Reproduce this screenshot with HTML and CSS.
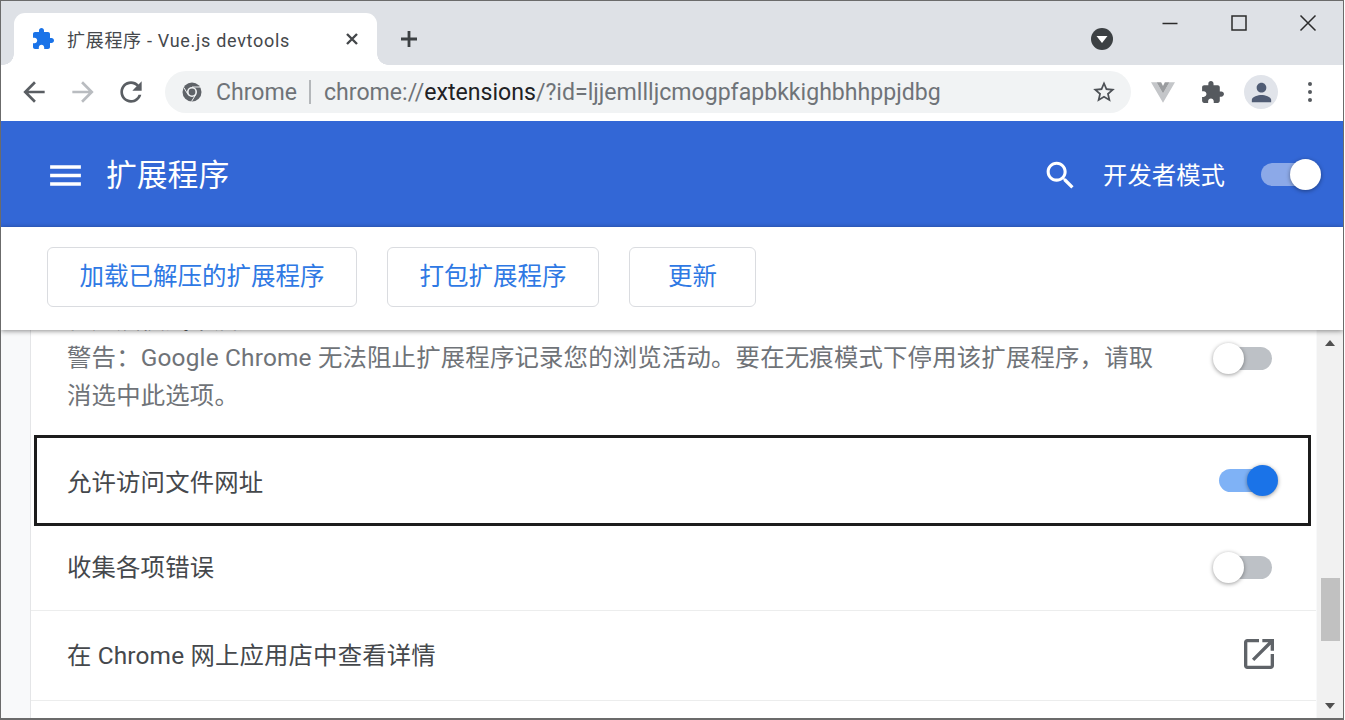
FILE: index.html
```html
<!DOCTYPE html>
<html lang="zh-CN">
<head>
<meta charset="utf-8">
<title>扩展程序 - Vue.js devtools</title>
<link rel="stylesheet" href="styles.css">
</head>
<body>
<div class="window">
  <div class="tabstrip">
    <div class="tab">
      <svg class="tab-icon" viewBox="0 0 24 24"><path d="M20.5 11H19V7c0-1.1-.9-2-2-2h-4V3.5C13 2.12 11.88 1 10.5 1S8 2.12 8 3.5V5H4c-1.1 0-1.99.9-1.99 2v3.8H3.5c1.49 0 2.7 1.21 2.7 2.7s-1.21 2.7-2.7 2.7H2V20c0 1.1.9 2 2 2h3.8v-1.5c0-1.49 1.21-2.7 2.7-2.7 1.49 0 2.7 1.21 2.7 2.7V22H17c1.1 0 2-.9 2-2v-4h1.5c1.38 0 2.5-1.12 2.5-2.5S21.88 11 20.5 11z"/></svg>
      <span class="tab-title">扩展程序 - Vue.js devtools</span>
      <svg class="tab-close" viewBox="0 0 14 14"><path d="M2 2l10 10M12 2L2 12"/></svg>
    </div>
    <svg class="new-tab" viewBox="0 0 20 20"><path d="M10 2v16M2 10h16"/></svg>
    <svg class="media" viewBox="0 0 22 22"><circle cx="11" cy="11" r="11"/><path class="media-arrow" d="M5.5 8h11L11 15z"/></svg>
    <div class="win-controls">
      <svg class="win-btn" viewBox="0 0 18 18"><path d="M1.5 9.5h15"/></svg>
      <svg class="win-btn" viewBox="0 0 18 18"><path d="M2 2h14v14H2z"/></svg>
      <svg class="win-btn" viewBox="0 0 18 18"><path d="M1.5 1.5l15 15M16.5 1.5l-15 15"/></svg>
    </div>
  </div>

  <div class="toolbar">
    <div class="nav">
      <svg class="nav-icon" viewBox="0 0 24 24"><path d="M20 11H7.83l5.59-5.59L12 4l-8 8 8 8 1.41-1.41L7.83 13H20v-2z"/></svg>
      <svg class="nav-icon nav-off" viewBox="0 0 24 24"><path d="M4 11h12.17l-5.59-5.59L12 4l8 8-8 8-1.41-1.41L16.17 13H4v-2z"/></svg>
      <svg class="nav-icon" viewBox="0 0 24 24"><path d="M17.65 6.35C16.2 4.9 14.21 4 12 4c-4.42 0-7.99 3.58-7.99 8s3.57 8 7.99 8c3.73 0 6.84-2.55 7.73-6h-2.08c-.82 2.33-3.04 4-5.65 4-3.31 0-6-2.69-6-6s2.69-6 6-6c1.66 0 3.14.69 4.22 1.78L13 11h7V4l-2.35 2.35z"/></svg>
    </div>
    <div class="omnibox">
      <svg class="site-icon" viewBox="0 0 20 20"><circle cx="10" cy="10" r="9.5" fill="#5f6368"/><circle cx="10" cy="10" r="5" fill="#f1f3f4"/><circle cx="10" cy="10" r="3.4" fill="#5f6368"/><path d="M10 5h8.5M6 12.5L1.8 5.5M13.8 12.5L9.5 19.5" stroke="#f1f3f4" stroke-width="1" fill="none"/></svg>
      <span class="site-name">Chrome</span>
      <span class="omni-sep"></span>
      <span class="url"><span class="url-dim">chrome://</span>extensions<span class="url-dim">/?id=ljjemllljcmogpfapbkkighbhhppjdbg</span></span>
      <svg class="star" viewBox="0 0 24 24"><path d="M22 9.24l-7.19-.62L12 2 9.19 8.63 2 9.24l5.46 4.73L5.82 21 12 17.27 18.18 21l-1.63-7.03L22 9.24zM12 15.4l-3.76 2.27 1-4.28-3.32-2.88 4.38-.38L12 6.1l1.71 4.04 4.38.38-3.32 2.88 1 4.28L12 15.4z"/></svg>
    </div>
    <div class="tools">
      <div class="tool">
        <svg class="vue" viewBox="0 0 26 22"><path fill="#c4c6c9" d="M0 0h6l7 12L20 0h6L13 22z"/><path fill="#9a9c9f" d="M6 0h5l2 4 2-4h5l-7 12z"/></svg>
      </div>
      <div class="tool">
        <svg class="puzzle" viewBox="0 0 24 24"><path d="M20.5 11H19V7c0-1.1-.9-2-2-2h-4V3.5C13 2.12 11.88 1 10.5 1S8 2.12 8 3.5V5H4c-1.1 0-1.99.9-1.99 2v3.8H3.5c1.49 0 2.7 1.21 2.7 2.7s-1.21 2.7-2.7 2.7H2V20c0 1.1.9 2 2 2h3.8v-1.5c0-1.49 1.21-2.7 2.7-2.7 1.49 0 2.7 1.21 2.7 2.7V22H17c1.1 0 2-.9 2-2v-4h1.5c1.38 0 2.5-1.12 2.5-2.5S21.88 11 20.5 11z"/></svg>
      </div>
      <div class="tool avatar">
        <svg class="person" viewBox="0 0 24 24"><path d="M12 12c2.21 0 4-1.79 4-4s-1.79-4-4-4-4 1.79-4 4 1.79 4 4 4zm0 2c-2.67 0-8 1.34-8 4v2h16v-2c0-2.66-5.33-4-8-4z"/></svg>
      </div>
      <div class="tool dots"><i></i><i></i><i></i></div>
    </div>
  </div>

  <header class="header">
    <svg class="menu" viewBox="0 0 24 24"><path d="M3 18h18v-2H3v2zm0-5h18v-2H3v2zm0-7v2h18V6H3z"/></svg>
    <h1 class="title">扩展程序</h1>
    <svg class="search" viewBox="0 0 24 24"><path d="M15.5 14h-.79l-.28-.27C15.41 12.59 16 11.11 16 9.5 16 5.91 13.09 3 9.5 3S3 5.91 3 9.5 5.91 16 9.5 16c1.61 0 3.09-.59 4.23-1.57l.27.28v.79l5 4.99L20.49 19l-4.99-5zm-6 0C7.01 14 5 11.99 5 9.5S7.01 5 9.5 5 14 7.01 14 9.5 11.99 14 9.5 14z"/></svg>
    <span class="dev-label">开发者模式</span>
    <span class="toggle toggle-head on"><i></i></span>
  </header>

  <div class="actions">
    <button class="btn btn-load">加载已解压的扩展程序</button>
    <button class="btn btn-pack">打包扩展程序</button>
    <button class="btn btn-update">更新</button>
  </div>

  <div class="body">
    <main class="card">
      <section class="row row-incognito">
        <div class="row-text">
          <div class="row-title">在无痕模式下启用</div>
          <div class="row-desc">警告：Google Chrome 无法阻止扩展程序记录您的浏览活动。要在无痕模式下停用该扩展程序，请取消选中此选项。</div>
        </div>
        <span class="toggle toggle-up"><i></i></span>
      </section>
      <section class="row row-files">
        <span class="row-label">允许访问文件网址</span>
        <span class="toggle on blue"><i></i></span>
      </section>
      <section class="row row-errors">
        <span class="row-label">收集各项错误</span>
        <span class="toggle"><i></i></span>
      </section>
      <section class="row row-store">
        <span class="row-label">在 Chrome 网上应用店中查看详情</span>
        <svg class="open" viewBox="0 0 24 24"><path d="M19 19H5V5h7V3H5c-1.11 0-2 .9-2 2v14c0 1.1.89 2 2 2h14c1.1 0 2-.9 2-2v-7h-2v7zM14 3v2h3.59l-9.83 9.83 1.41 1.41L19 6.41V10h2V3h-7z"/></svg>
      </section>
    </main>
    <div class="scrollbar">
      <span class="arrow arrow-up"></span>
      <span class="thumb"></span>
      <span class="arrow arrow-down"></span>
    </div>
  </div>
</div>
</body>
</html>
```

FILE: styles.css
```css
* { box-sizing: border-box; }
html, body { margin: 0; padding: 0; }
body {
  width: 1345px;
  height: 720px;
  overflow: hidden;
  background: #fff;
  font-family: Roboto, "Noto Sans CJK SC", sans-serif;
}
svg { display: block; flex: none; }

.window {
  width: 1344px;
  height: 720px;
  display: flex;
  flex-direction: column;
  border: 1px solid #6b6b6b;
  border-bottom-width: 2px;
  background: #fff;
  overflow: hidden;
}

/* Tab strip */
.tabstrip {
  height: 64px;
  flex: none;
  background: #dee1e6;
  display: flex;
  align-items: flex-start;
  padding-left: 13px;
}
.tab {
  position: relative;
  width: 363px;
  height: 52px;
  margin-top: 12px;
  background: #fff;
  border-radius: 11px 11px 0 0;
  display: flex;
  align-items: center;
  padding: 0 18px 0 17px;
  color: #45484c;
}
.tab::before,
.tab::after {
  content: "";
  position: absolute;
  bottom: 0;
  width: 11px;
  height: 11px;
}
.tab::before {
  left: -11px;
  background: radial-gradient(circle at 0 0, #dee1e6 10.5px, #fff 11px);
}
.tab::after {
  right: -11px;
  background: radial-gradient(circle at 100% 0, #dee1e6 10.5px, #fff 11px);
}
.tab-icon { width: 24px; height: 24px; fill: #1a73e8; }
.tab-title {
  margin-left: 12px;
  font-size: 18px;
  letter-spacing: .7px;
  white-space: nowrap;
  flex: 1;
}
.tab-close { width: 14px; height: 14px; fill: none; stroke: #44474a; stroke-width: 2.4; }
.new-tab {
  width: 20px;
  height: 20px;
  margin: 28px 0 0 22px;
  fill: none;
  stroke: #3c4043;
  stroke-width: 2.8;
}
.media { width: 22px; height: 22px; margin: 27px 0 0 672px; fill: #3c4043; }
.media-arrow { fill: #fff; }
.win-controls {
  margin: 13px 0 0 48px;
  display: flex;
  gap: 51px;
}
.win-btn { width: 18px; height: 18px; fill: none; stroke: #2b2b2b; stroke-width: 1.5; }

/* Toolbar */
.toolbar {
  height: 56px;
  flex: none;
  display: flex;
  align-items: center;
  padding: 0 0 2px 17px;
  background: #fff;
}
.nav { display: flex; gap: 16.5px; }
.nav-icon { width: 32px; height: 32px; fill: #5a5e63; }
.nav-off { fill: #b9bcc0; }
.omnibox {
  width: 966px;
  height: 42px;
  margin-left: 18px;
  border-radius: 21px;
  background: #f1f3f4;
  display: flex;
  align-items: center;
  padding: 0 14px 0 17px;
  font-size: 23.1px;
  white-space: nowrap;
}
.site-icon { width: 20px; height: 20px; }
.site-name { margin-left: 14px; color: #6f7378; }
.omni-sep { width: 2px; height: 24px; margin: 0 13px 0 12px; background: #b4b7ba; }
.url { color: #202124; flex: 1; }
.url-dim { color: #6f7378; }
.star { width: 26px; height: 26px; fill: #4d5156; }
.tools { display: flex; gap: 15px; margin-left: 15px; }
.tool {
  width: 34px;
  height: 34px;
  display: flex;
  align-items: center;
  justify-content: center;
}
.vue { width: 24px; height: 21px; }
.puzzle { width: 25px; height: 25px; fill: #55595e; }
.avatar { border-radius: 50%; background: #e1e4ea; }
.person { width: 29px; height: 29px; fill: #505c74; }
.dots { flex-direction: column; gap: 3.5px; }
.dots i { width: 4.5px; height: 4.5px; border-radius: 50%; background: #55595e; }

/* Header */
.header {
  height: 106px;
  flex: none;
  background: #3367d6;
  color: #fff;
  display: flex;
  align-items: center;
  padding-top: 2px;
}
.menu { width: 41px; height: 41px; margin-left: 44px; fill: #fff; }
.title {
  margin: 2px 0 0 20px;
  font-size: 30.8px;
  font-weight: 400;
  flex: 1;
  line-height: 40px;
}
.search { width: 37px; height: 37px; fill: #fff; }
.dev-label { margin: 0 0 4px 24px; font-size: 24.4px; }

/* Toggles */
.toggle {
  position: relative;
  width: 52px;
  height: 23px;
  border-radius: 12px;
  background: #bdc1c6;
  flex: none;
}
.toggle i {
  position: absolute;
  top: -4px;
  left: -7px;
  width: 31px;
  height: 31px;
  border-radius: 50%;
  background: #fff;
  box-shadow: 0 1px 4px rgba(0, 0, 0, .4);
}
.toggle.on i { left: auto; right: -6px; }
.toggle.blue { background: #7fb2f6; width: 53px; }
.toggle.blue i { background: #1a73e8; }
.toggle-head { margin: 0 30px 2px 36px; background: #8ca9e8; }
.toggle-head.on i { right: -8px; }

/* Action bar */
.actions {
  position: relative;
  z-index: 2;
  height: 103px;
  flex: none;
  background: #fff;
  display: flex;
  gap: 30px;
  padding: 20px 0 0 46px;
  box-shadow: 0 1px 5px rgba(0, 0, 0, .45);
}
.btn {
  height: 60px;
  border: 1px solid #dadce0;
  border-radius: 6px;
  background: #fff;
  color: #2f79e4;
  font: 400 24.5px Roboto, "Noto Sans CJK SC", sans-serif;
  padding: 0 0 5px;
}
.btn-load { width: 310px; }
.btn-pack { width: 212px; }
.btn-update { width: 127px; }

/* Content */
.body {
  flex: 1;
  min-height: 0;
  display: flex;
  background: #f8f9fa;
  padding-left: 29px;
  overflow: hidden;
}
.card {
  width: 1287px;
  margin-top: -29px;
  background: #fff;
  border-left: 1px solid #e4e5e7;
  color: #45484c;
  font-size: 24.4px;
  letter-spacing: .15px;
}
.row {
  display: flex;
  align-items: center;
  justify-content: space-between;
  padding: 0 44px 0 36px;
}
.row-incognito {
  align-items: flex-start;
  height: 134px;
  padding-top: 0;
}
.row-text { width: 1090px; line-height: 38px; }
.row-desc { color: #6f7378; letter-spacing: .18px; }
.toggle-up { margin-top: 46px; }
.row-files {
  height: 91px;
  margin: 0 5px 0 3px;
  padding: 0 36px 0 30px;
  border: 3px solid #1c1c1c;
}
.row-errors { height: 85px; border-bottom: 1px solid #eceded; padding-bottom: 5px; }
.row-errors .toggle { margin-top: 3px; }
.row-store { height: 90px; border-bottom: 1px solid #eceded; padding-bottom: 4px; }
.open { width: 40px; height: 40px; margin-right: -7px; fill: #5f6368; }

/* Scrollbar */
.scrollbar {
  position: relative;
  width: 26px;
  margin-left: 1px;
  background: #f1f1f1;
  flex: none;
}
.thumb {
  position: absolute;
  top: 248px;
  left: 4px;
  width: 19px;
  height: 63px;
  background: #c1c1c1;
}
.arrow {
  position: absolute;
  left: 8px;
  width: 0;
  height: 0;
  border-left: 5.5px solid transparent;
  border-right: 5.5px solid transparent;
}
.arrow-up { top: 10px; border-bottom: 6px solid #505050; }
.arrow-down { bottom: 9px; border-top: 6px solid #505050; }
```
